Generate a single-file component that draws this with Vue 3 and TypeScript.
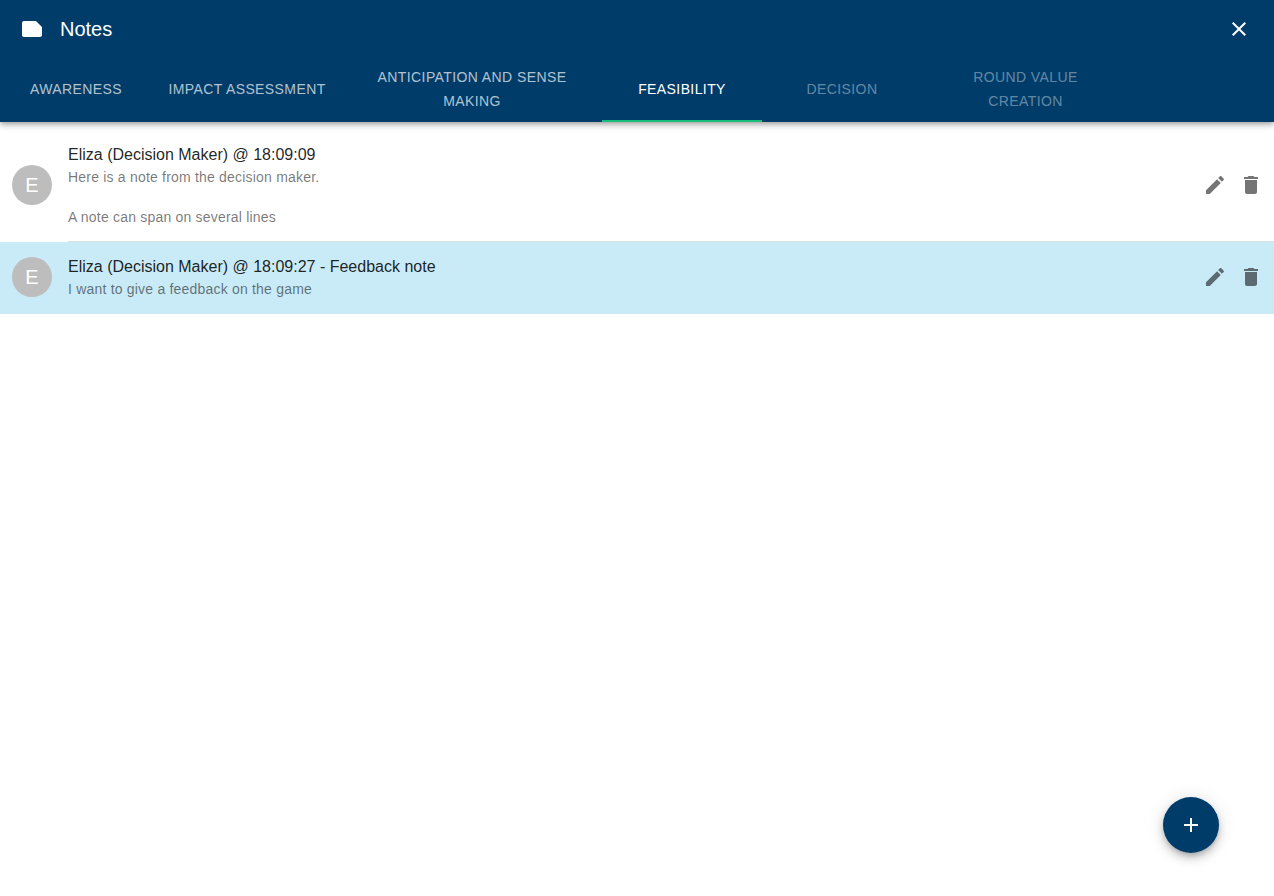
<script setup lang="ts">
const tabs = [
  { label: 'Awareness', cls: 'w-aware' },
  { label: 'Impact assessment', cls: 'w-impact' },
  { label: 'Anticipation and sense making', cls: 'w-antic' },
  { label: 'Feasibility', cls: 'w-std selected' },
  { label: 'Decision', cls: 'w-std disabled' },
  { label: 'Round value creation', cls: 'w-round disabled' },
]

const notes = [
  {
    id: 1,
    title: 'Eliza (Decision Maker) @ 18:09:09',
    lines: ['Here is a note from the decision maker.', '', 'A note can span on several lines'],
    feedback: false,
  },
  {
    id: 2,
    title: 'Eliza (Decision Maker) @ 18:09:27 - Feedback note',
    lines: ['I want to give a feedback on the game'],
    feedback: true,
  },
]
</script>

<template>
  <div class="page">
    <header class="app-bar">
      <div class="toolbar">
        <svg class="note-icon" viewBox="0 0 24 24" width="24" height="24">
          <path d="M22 10l-6-6H4c-1.1 0-2 .9-2 2v12.01c0 1.1.9 1.99 2 1.99l16-.01c1.1 0 2-.89 2-1.99v-8z" />
        </svg>
        <h1 class="title">Notes</h1>
        <button class="close-btn" aria-label="Close">
          <svg viewBox="0 0 24 24" width="24" height="24">
            <path d="M19 6.41L17.59 5 12 10.59 6.41 5 5 6.41 10.59 12 5 17.59 6.41 19 12 13.41 17.59 19 19 17.59 13.41 12z" />
          </svg>
        </button>
      </div>
      <nav class="tabs">
        <button v-for="tab in tabs" :key="tab.label" class="tab" :class="tab.cls">
          {{ tab.label }}
        </button>
      </nav>
    </header>

    <ul class="note-list">
      <li v-for="note in notes" :key="note.id" class="note" :class="{ feedback: note.feedback }">
        <div class="avatar">E</div>
        <div class="note-text">
          <div class="note-title">{{ note.title }}</div>
          <div v-for="(line, i) in note.lines" :key="i" class="note-line">{{ line }}</div>
        </div>
        <div class="note-actions">
          <button class="icon-btn" aria-label="Edit">
            <svg viewBox="0 0 24 24" width="24" height="24">
              <path d="M3 17.25V21h3.75L17.81 9.94l-3.75-3.75L3 17.25zM20.71 7.04c.39-.39.39-1.02 0-1.41l-2.34-2.34c-.39-.39-1.02-.39-1.41 0l-1.83 1.83 3.75 3.75 1.83-1.83z" />
            </svg>
          </button>
          <button class="icon-btn" aria-label="Delete">
            <svg viewBox="0 0 24 24" width="24" height="24">
              <path d="M6 19c0 1.1.9 2 2 2h8c1.1 0 2-.9 2-2V7H6v12zM19 4h-3.5l-1-1h-5l-1 1H5v2h14V4z" />
            </svg>
          </button>
        </div>
      </li>
    </ul>

    <button class="fab" aria-label="Add note">
      <svg viewBox="0 0 24 24" width="24" height="24">
        <path d="M19 13h-6v6h-2v-6H5v-2h6V5h2v6h6v2z" />
      </svg>
    </button>
  </div>
</template>

<style>
html, body {
  margin: 0;
  background: #fff;
}
</style>

<style scoped>
.page {
  position: relative;
  height: 896px;
  overflow: hidden;
  background: #fff;
  font-family: "Liberation Sans", Arial, sans-serif;
}

.app-bar {
  background: #003c69;
  color: #fff;
  box-shadow: 0 2px 4px -1px rgba(0, 0, 0, 0.2), 0 4px 5px 0 rgba(0, 0, 0, 0.14), 0 1px 10px 0 rgba(0, 0, 0, 0.12);
  position: relative;
}

.toolbar {
  display: flex;
  align-items: center;
  height: 57px;
  padding: 0 24px 0 20px;
}

.note-icon {
  fill: #fff;
  margin-right: 16px;
}

.title {
  margin: 0;
  font-size: 20px;
  font-weight: 400;
  line-height: 1;
  flex: 1;
}

.close-btn {
  background: none;
  border: none;
  padding: 0;
  display: flex;
  fill: #fff;
  margin-right: -1px;
}

.tabs {
  display: flex;
  height: 65px;
}

.tab {
  background: none;
  border: none;
  border-bottom: 2px solid transparent;
  padding: 0 12px;
  box-sizing: border-box;
  font: inherit;
  font-size: 14px;
  line-height: 24px;
  letter-spacing: 0.4px;
  text-transform: uppercase;
  text-align: center;
  color: rgba(255, 255, 255, 0.7);
  flex-shrink: 0;
}

.w-aware { width: 152px; }
.w-impact { width: 190px; }
.w-antic { width: 260px; padding: 0 24px; }
.w-std { width: 160px; }
.w-round { width: 207px; }

.tab.selected {
  color: #fff;
  border-bottom-color: #1abc7b;
}

.tab.disabled {
  color: rgba(255, 255, 255, 0.4);
}

.note-list {
  list-style: none;
  margin: 0;
  padding: 8px 0 0;
}

.note {
  display: flex;
  align-items: center;
  position: relative;
  padding: 13px 0 15px 12px;
}

.note + .note::before {
  content: "";
  position: absolute;
  left: 68px;
  right: 0;
  top: -1px;
  height: 1px;
  background: #e0e0e0;
}

.note.feedback {
  background: #c9eaf7;
}

.avatar {
  width: 40px;
  height: 40px;
  border-radius: 50%;
  background: #bdbdbd;
  color: #fff;
  font-size: 20px;
  display: flex;
  align-items: center;
  justify-content: center;
  margin-right: 16px;
  flex-shrink: 0;
}

.note-text {
  flex: 1;
  min-width: 0;
}

.note-title {
  font-size: 16px;
  line-height: 24px;
  color: rgba(0, 0, 0, 0.87);
}

.note-line {
  font-size: 14px;
  line-height: 20px;
  min-height: 20px;
  letter-spacing: 0.2px;
  color: rgba(0, 0, 0, 0.54);
}

.note-actions {
  display: flex;
  gap: 12px;
  padding-right: 11px;
}

.icon-btn {
  background: none;
  border: none;
  padding: 0;
  display: flex;
  fill: rgba(0, 0, 0, 0.54);
}

.fab {
  position: absolute;
  right: 55px;
  bottom: 43px;
  width: 56px;
  height: 56px;
  border: none;
  border-radius: 50%;
  padding: 0;
  display: flex;
  align-items: center;
  justify-content: center;
  background: #003c69;
  fill: #fff;
  box-shadow: 0 3px 5px -1px rgba(0, 0, 0, 0.2), 0 6px 10px 0 rgba(0, 0, 0, 0.14), 0 1px 18px 0 rgba(0, 0, 0, 0.12);
}
</style>
